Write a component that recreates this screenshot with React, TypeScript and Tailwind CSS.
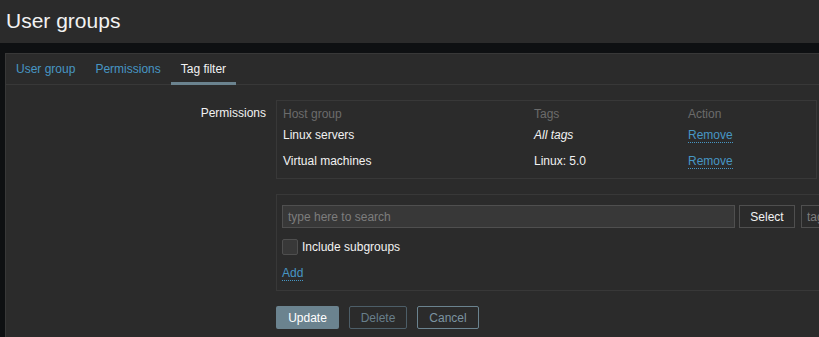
import React from "react";

const font = { fontFamily: '"Liberation Sans", Arial, sans-serif' };

function Link({ children }: { children: React.ReactNode }) {
  return (
    <span className="text-[#4796c4] border-b border-dotted border-[#4796c4] leading-[14px] inline-block">
      {children}
    </span>
  );
}

export default function App() {
  return (
    <div style={font} className="w-[819px] h-[337px] overflow-hidden bg-[#0e1012] text-[12px] text-[#f2f2f2]">
      <div className="h-[43px] bg-[#2b2b2b] flex items-center px-[6px]">
        <h1 className="text-[21px] leading-none text-[#f2f2f2] mt-[-3px]">User groups</h1>
      </div>
      <div className="mt-[10px] ml-[5px] bg-[#2b2b2b] border-l border-t border-[#383838] h-[300px] overflow-hidden">
        <div className="flex h-[31px] border-b border-[#383838] pl-0">
          <div className="px-[10px] h-full flex items-center text-[#4796c4] pb-[1px]">User group</div>
          <div className="px-[10px] h-full flex items-center text-[#4796c4] pb-[1px]">Permissions</div>
          <div className="px-[10px] h-full flex items-center text-[#f2f2f2] border-b-[3px] border-[#6b838f] relative top-[1px]">
            Tag filter
          </div>
        </div>
        <div className="flex pt-[15px]">
          <div className="w-[260px] shrink-0 text-right pt-[4px]">Permissions</div>
          <div className="ml-[10px] shrink-0 w-[640px]">
            <div className="w-[541px] border border-[#383838] pt-[4px] pb-[3px] px-[6px]">
              <div className="flex h-[18px] items-center text-[#6b6b6b]">
                <div className="w-[251px]">Host group</div>
                <div className="w-[154px]">Tags</div>
                <div>Action</div>
              </div>
              <div className="flex h-[24px] items-center">
                <div className="w-[251px]">Linux servers</div>
                <div className="w-[154px] italic">All tags</div>
                <div><Link>Remove</Link></div>
              </div>
              <div className="flex h-[28px] items-center">
                <div className="w-[251px]">Virtual machines</div>
                <div className="w-[154px]">Linux: 5.0</div>
                <div><Link>Remove</Link></div>
              </div>
            </div>
            <div className="mt-[15px] w-[640px] h-[97px] border border-[#383838] pl-[5px] pt-[10px]">
              <div className="flex items-center">
                <div className="w-[453px] h-[23px] bg-[#383838] border border-[#4f4f4f] px-[5px] flex items-center text-[#7d7d7d]">
                  type here to search
                </div>
                <div className="ml-[4px] w-[56px] h-[23px] border border-[#4f4f4f] flex items-center justify-center text-[#f2f2f2]">
                  Select
                </div>
                <div className="ml-[6px] w-[100px] h-[23px] border border-[#4f4f4f] bg-[#2b2b2b] px-[5px] flex items-center text-[#7d7d7d]">
                  tags
                </div>
              </div>
              <div className="flex items-center mt-[10px]">
                <div className="w-[16px] h-[16px] bg-[#383838] border border-[#4f4f4f] rounded-[2px]" />
                <span className="ml-[4px]">Include subgroups</span>
              </div>
              <div className="mt-[8px]">
                <Link>Add</Link>
              </div>
            </div>
            <div className="flex mt-[15px] gap-[10px]">
              <div className="w-[63px] h-[23px] bg-[#6b838f] rounded-[2px] flex items-center justify-center text-white">
                Update
              </div>
              <div className="w-[58px] h-[23px] border border-[#4d5e68] rounded-[2px] flex items-center justify-center text-[#687e8a]">
                Delete
              </div>
              <div className="w-[62px] h-[23px] border border-[#6b838f] rounded-[2px] flex items-center justify-center text-[#7b93a0]">
                Cancel
              </div>
            </div>
          </div>
        </div>
      </div>
    </div>
  );
}
